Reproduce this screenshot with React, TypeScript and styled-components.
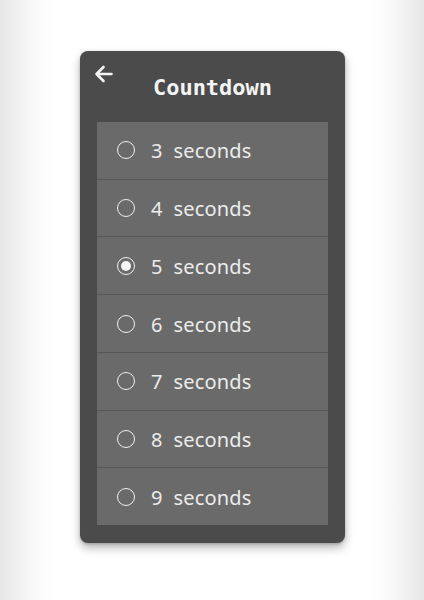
import React, { useState } from "react";
import styled, { createGlobalStyle } from "styled-components";

const Global = createGlobalStyle`
  html, body { margin: 0; padding: 0; }
  body {
    width: 424px;
    height: 600px;
    overflow: hidden;
    background: linear-gradient(to right, #e6e6e6 0px, #fbfbfb 38px, #ffffff 58px, #ffffff 366px, #fbfbfb 386px, #e6e6e6 424px);
    font-family: "DejaVu Sans Mono", "Liberation Mono", monospace;
  }
`;

const Page = styled.div`
  display: flex;
  justify-content: flex-start;
  padding: 51px 0 0 80px;
`;

const Card = styled.div`
  width: 265px;
  height: 492px;
  background: #4b4b4b;
  border-radius: 8px;
  box-shadow: 0 5px 10px rgba(0, 0, 0, 0.28), 0 1px 3px rgba(0, 0, 0, 0.2);
  display: flex;
  flex-direction: column;
  box-sizing: border-box;
  padding: 0 17px 18px 17px;
`;

const Header = styled.div`
  height: 71px;
  display: grid;
  grid-template-columns: 1fr auto 1fr;
  align-items: start;
`;

const BackButton = styled.button`
  justify-self: start;
  margin: 13px 0 0 -3px;
  padding: 0;
  border: 0;
  background: none;
  width: 20px;
  height: 20px;
  display: flex;
  align-items: center;
  justify-content: center;
  cursor: pointer;
`;

const Title = styled.h1`
  margin: 24px 0 0 0;
  font-family: "DejaVu Sans Mono", "Liberation Mono", monospace;
  font-weight: bold;
  font-size: 22px;
  line-height: 26px;
  color: #f4f4f4;
`;

const List = styled.div`
  flex: 1;
  background: #6a6a6a;
  display: flex;
  flex-direction: column;
`;

const Row = styled.label<{ $first: boolean }>`
  flex: 1;
  display: flex;
  align-items: center;
  gap: 16px;
  padding-left: 20px;
  border-top: ${(p) => (p.$first ? "none" : "1px solid #575757")};
  cursor: pointer;
`;

const Radio = styled.span<{ $checked: boolean }>`
  width: 18px;
  height: 18px;
  box-sizing: border-box;
  border-radius: 50%;
  border: 1.6px solid #f0f0f0;
  display: flex;
  align-items: center;
  justify-content: center;
  &::after {
    content: "";
    width: 10px;
    height: 10px;
    border-radius: 50%;
    background: #f4f4f4;
    display: ${(p) => (p.$checked ? "block" : "none")};
  }
`;

const Label = styled.span`
  display: flex;
  gap: 11px;
  font-family: "Noto Sans", "Open Sans", sans-serif;
  font-size: 20px;
  letter-spacing: 0.15px;
  color: #ececec;
  line-height: 24px;
  margin-top: 2px;
`;

const options = [3, 4, 5, 6, 7, 8, 9];

export default function App() {
  const [value, setValue] = useState(5);
  return (
    <>
      <Global />
      <Page>
        <Card>
          <Header>
            <BackButton aria-label="Back">
              <svg width="20" height="20" viewBox="0 0 20 20" fill="none">
                <path
                  d="M17.5 10H3M9.5 3L2.5 10l7 7"
                  stroke="#f4f4f4"
                  strokeWidth="2.6"
                  strokeLinecap="round"
                  strokeLinejoin="round"
                />
              </svg>
            </BackButton>
            <Title>Countdown</Title>
            <span />
          </Header>
          <List>
            {options.map((n, i) => (
              <Row key={n} $first={i === 0} onClick={() => setValue(n)}>
                <Radio $checked={value === n} />
                <Label>
                  <span>{n}</span>
                  <span>seconds</span>
                </Label>
              </Row>
            ))}
          </List>
        </Card>
      </Page>
    </>
  );
}
